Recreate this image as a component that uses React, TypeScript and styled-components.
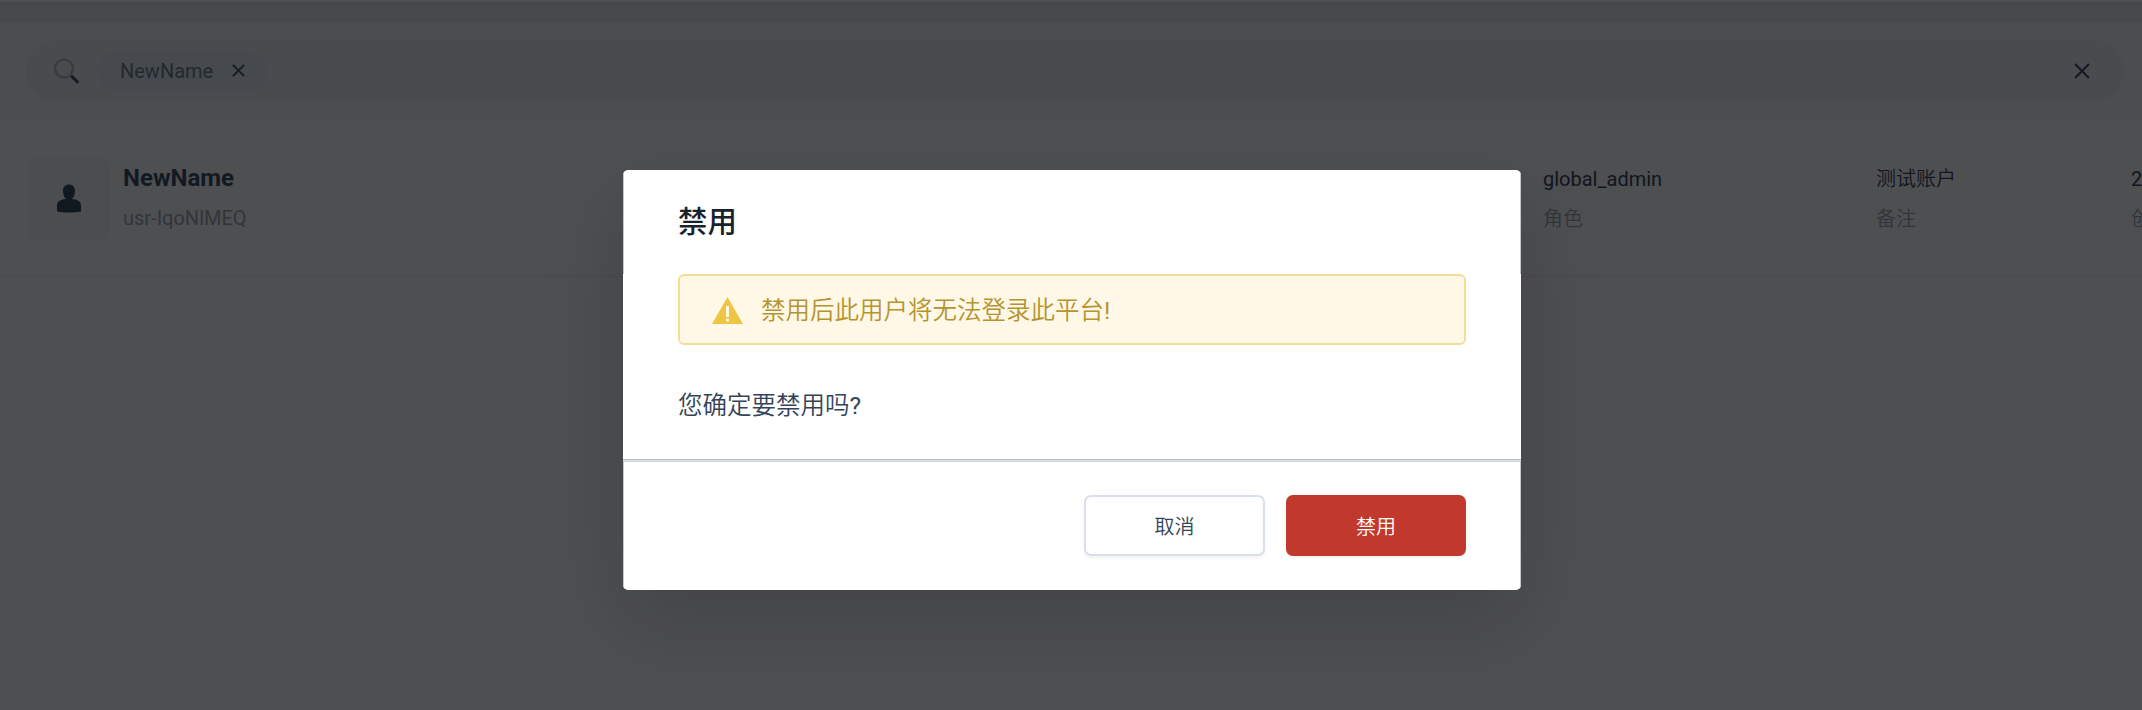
import React from "react";
import styled, { createGlobalStyle } from "styled-components";

const GlobalStyle = createGlobalStyle`
  * { box-sizing: border-box; }
  html, body, #root { height: 100%; margin: 0; }
  body {
    overflow: hidden;
    background: #4e4f51;
    font-family: Roboto, "Noto Sans CJK SC", sans-serif;
    font-size: 20px;
  }
  svg { display: block; flex: none; }
`;

const Page = styled.div`
  height: 710px;
  overflow: hidden;
  background: #4e4f51;
`;

const TopStrip = styled.div`
  height: 23px;
  border-top: 2px solid #4f5053;
  background: linear-gradient(#434648, #464a4d 5px);
`;

const SearchSection = styled.div`
  height: 97px;
  padding: 17px 18px 0 26px;
  background: #4c4d51;
  border-bottom: 1px solid #4a4b4e;
`;

const SearchBar = styled.div`
  display: flex;
  align-items: center;
  height: 61px;
  padding: 0 34px 0 27px;
  border-radius: 31px;
  background: #4a4b4f;
`;

const Tag = styled.div`
  display: flex;
  align-items: center;
  gap: 19px;
  height: 41px;
  width: 170px;
  margin: 0 auto 0 17px;
  padding: 0 0 0 23px;
  border-radius: 21px;
  background: #464a4e;
  color: #23282f;
  line-height: 24px;
`;

const UserRow = styled.div`
  display: flex;
  height: 157px;
  padding: 37px 0 0 28px;
  border-bottom: 1px solid #48494b;
`;

const Avatar = styled.div`
  display: flex;
  align-items: center;
  justify-content: center;
  flex: none;
  width: 82px;
  height: 82px;
  margin-right: 13px;
  border-radius: 8px;
  background: #4b4d51;
`;

const Field = styled.div<{ $width: number }>`
  flex: none;
  width: ${(p) => p.$width}px;
  white-space: nowrap;
`;

const FieldValue = styled.div<{ $strong?: boolean; $light?: boolean }>`
  height: 40px;
  padding-top: ${(p) => (p.$strong ? 6 : 7)}px;
  line-height: 30px;
  font-size: ${(p) => (p.$strong ? 24 : 20)}px;
  font-weight: ${(p) => (p.$strong ? 700 : p.$light ? 350 : 400)};
  color: ${(p) => (p.$strong ? "#121922" : "#11151f")};
`;

const FieldLabel = styled.div<{ $light?: boolean }>`
  padding-top: ${(p) => (p.$light ? 7 : 6)}px;
  line-height: 30px;
  font-weight: ${(p) => (p.$light ? 350 : 400)};
  color: #30353c;
`;

const Overlay = styled.div`
  position: absolute;
  inset: 0;
  display: flex;
  justify-content: center;
  align-items: flex-start;
  padding: 170px 0 0 2px;
  overflow: hidden;
`;

const Dialog = styled.div`
  display: flex;
  flex-direction: column;
  width: 898px;
  height: 420px;
  border-radius: 5px;
  overflow: hidden;
  background: #fff;
  box-shadow: 0 32px 84px rgba(0, 0, 0, 0.14);
`;

const DialogHeader = styled.div`
  height: 104px;
  padding: 30px 54px 0;
  border: solid #c5c7c8;
  border-width: 0 1px;
`;

const Title = styled.h2`
  margin: 0;
  color: #18222d;
  font-size: 29.4px;
  font-weight: 500;
  line-height: 44px;
`;

const DialogBody = styled.div`
  height: 185px;
  padding: 0 55px;
`;

const Alert = styled.div`
  display: flex;
  align-items: center;
  gap: 18px;
  height: 71px;
  padding: 0 32px 2px;
  border: 2px solid #f0df98;
  border-radius: 6px;
  background: #fff8e6;
  color: #b5942f;
  font-size: 24.5px;
  font-weight: 350;
  svg { margin-top: 3px; }
`;

const Question = styled.p`
  margin: 43px 0 0;
  color: #344458;
  font-size: 24.5px;
  font-weight: 350;
  line-height: 36px;
`;

const Punctuation = styled.span`
  font-weight: 400;
`;

const DialogFooter = styled.div`
  display: flex;
  justify-content: flex-end;
  gap: 21px;
  flex: 1;
  padding: 33px 54px 0;
  border: solid #c5c7c8;
  border-width: 0 1px;
`;

const Divider = styled.div`
  height: 3px;
  border-top: 1px solid #b0bcc5;
  border-bottom: 1px solid #cbd0d2;
  background: #dde7ee;
`;

const Button = styled.button<{ $danger?: boolean }>`
  width: ${(p) => (p.$danger ? 180 : 181)}px;
  height: 61px;
  padding: 0 0 1px;
  border: 2px solid ${(p) => (p.$danger ? "#c1392d" : "#d8e0e9")};
  border-radius: 7px;
  background: ${(p) => (p.$danger ? "#c1392d" : "#fff")};
  box-shadow: 0 2px 3px rgba(0, 0, 0, 0.05);
  color: ${(p) => (p.$danger ? "#fff" : "#344458")};
  font: inherit;
  font-size: 20px;
  font-weight: 350;
`;

const CloseIcon = ({ size }: { size: number }) => (
  <svg width={size} height={size} viewBox="0 0 16 16">
    <path d="M1 1 15 15M15 1 1 15" stroke="#141b25" strokeWidth="2.2" fill="none" />
  </svg>
);

const SearchIcon = () => (
  <svg width="27" height="27" viewBox="0 0 27 27">
    <circle cx="11" cy="11.500" r="9" stroke="#3a3c3f" strokeWidth="2.5" fill="none" />
    <path d="m18.200 18.700 7 7" stroke="#131a24" strokeWidth="3" />
  </svg>
);

const UserIcon = () => (
  <svg width="24" height="29" viewBox="0 0 24 29" fill="#121820">
    <path d="M12 0.5c-3.700 0-6 2.600-6 6.500 0 3.500 1.100 6.300 3 7.800v.2C4 15.500 0 17.200 0 21.500V27.500c3.500.7 7.500 1 12 1s8.500-.3 12-1V21.500c0-4.300-4-6-9-6.500v-.2c1.900-1.500 3-4.300 3-7.800 0-3.900-2.300-6.500-6-6.500z" />
  </svg>
);

const WarningIcon = () => (
  <svg width="31" height="27" viewBox="0 0 31 27">
    <path d="M15.500 0 31 27H0z" fill="#eec643" />
    <rect x="14" y="9" width="3" height="11" fill="#fff8e6" />
    <rect x="14" y="21.500" width="3" height="3" rx="1" fill="#fff8e6" />
  </svg>
);

export default function App() {
  return (
    <>
      <GlobalStyle />
      <Page>
        <TopStrip />
        <SearchSection>
          <SearchBar>
            <SearchIcon />
            <Tag>
              <span>NewName</span>
              <CloseIcon size={13} />
            </Tag>
            <CloseIcon size={16} />
          </SearchBar>
        </SearchSection>
        <UserRow>
          <Avatar>
            <UserIcon />
          </Avatar>
          <Field $width={1420}>
            <FieldValue $strong>NewName</FieldValue>
            <FieldLabel>usr-IqoNlMEQ</FieldLabel>
          </Field>
          <Field $width={333}>
            <FieldValue>global_admin</FieldValue>
            <FieldLabel $light>角色</FieldLabel>
          </Field>
          <Field $width={255}>
            <FieldValue $light>测试账户</FieldValue>
            <FieldLabel $light>备注</FieldLabel>
          </Field>
          <Field $width={200}>
            <FieldValue>2</FieldValue>
            <FieldLabel $light>创</FieldLabel>
          </Field>
        </UserRow>
      </Page>
      <Overlay>
        <Dialog role="dialog">
          <DialogHeader>
            <Title>禁用</Title>
          </DialogHeader>
          <DialogBody>
            <Alert>
              <WarningIcon />
              <span>
                禁用后此用户将无法登录此平台<Punctuation>!</Punctuation>
              </span>
            </Alert>
            <Question>
              您确定要禁用吗<Punctuation>?</Punctuation>
            </Question>
          </DialogBody>
          <Divider />
          <DialogFooter>
            <Button>取消</Button>
            <Button $danger>禁用</Button>
          </DialogFooter>
        </Dialog>
      </Overlay>
    </>
  );
}
